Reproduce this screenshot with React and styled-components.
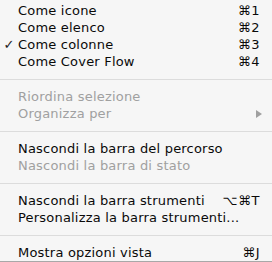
import React from "react";
import styled, { createGlobalStyle } from "styled-components";

const GlobalStyle = createGlobalStyle`
  html, body {
    margin: 0;
    padding: 0;
    background: #ffffff;
  }
`;

const groups = [
  [
    { label: "Come icone", key: "⌘1" },
    { label: "Come elenco", key: "⌘2" },
    { label: "Come colonne", key: "⌘3", checked: true },
    { label: "Come Cover Flow", key: "⌘4" },
  ],
  [
    { label: "Riordina selezione", disabled: true },
    { label: "Organizza per", disabled: true, submenu: true },
  ],
  [
    { label: "Nascondi la barra del percorso" },
    { label: "Nascondi la barra di stato", disabled: true },
  ],
  [
    { label: "Nascondi la barra strumenti", key: "⌥⌘T" },
    { label: "Personalizza la barra strumenti..." },
  ],
  [{ label: "Mostra opzioni vista", key: "⌘J" }],
];

const App = () => {
  return (
    <>
      <GlobalStyle />
      <Menu>
        {groups.map((group, gi) => (
          <React.Fragment key={gi}>
            {gi > 0 && <Separator />}
            {group.map((item) => (
              <Row key={item.label} $disabled={item.disabled}>
                <Check>{item.checked ? "✓" : ""}</Check>
                <Label>{item.label}</Label>
                {item.key && <Shortcut>{item.key}</Shortcut>}
                {item.submenu && <Arrow />}
              </Row>
            ))}
          </React.Fragment>
        ))}
      </Menu>
    </>
  );
};

export default App;

const Menu = styled.div`
  width: 272px;
  height: 262px;
  box-sizing: border-box;
  padding-top: 2px;
  background: #f6f6f6;
  border-bottom: 1px solid #a8a8a8;
  font-family: "DejaVu Sans", sans-serif;
  font-size: 13px;
  display: flex;
  flex-direction: column;
`;
const Row = styled.div`
  height: 17px;
  display: flex;
  align-items: center;
  padding-right: 12px;
  color: ${(p) => (p.$disabled ? "#a0a0a0" : "#0a0a0a")};
`;
const Check = styled.span`
  width: 18px;
  flex-shrink: 0;
  text-align: center;
  font-size: 13px;
  font-weight: bold;
  color: #222;
`;
const Label = styled.span`
  flex: 1;
  white-space: nowrap;
  letter-spacing: 0.2px;
`;
const Shortcut = styled.span`
  white-space: nowrap;
  letter-spacing: 0.5px;
`;
const Arrow = styled.span`
  width: 0;
  height: 0;
  border-top: 4px solid transparent;
  border-bottom: 4px solid transparent;
  border-left: 6px solid #a0a0a0;
  margin-right: -2px;
`;
const Separator = styled.div`
  height: 18px;
  display: flex;
  align-items: center;
  &::after {
    content: "";
    flex: 1;
    height: 1px;
    background: #dcdcdc;
  }
`;
